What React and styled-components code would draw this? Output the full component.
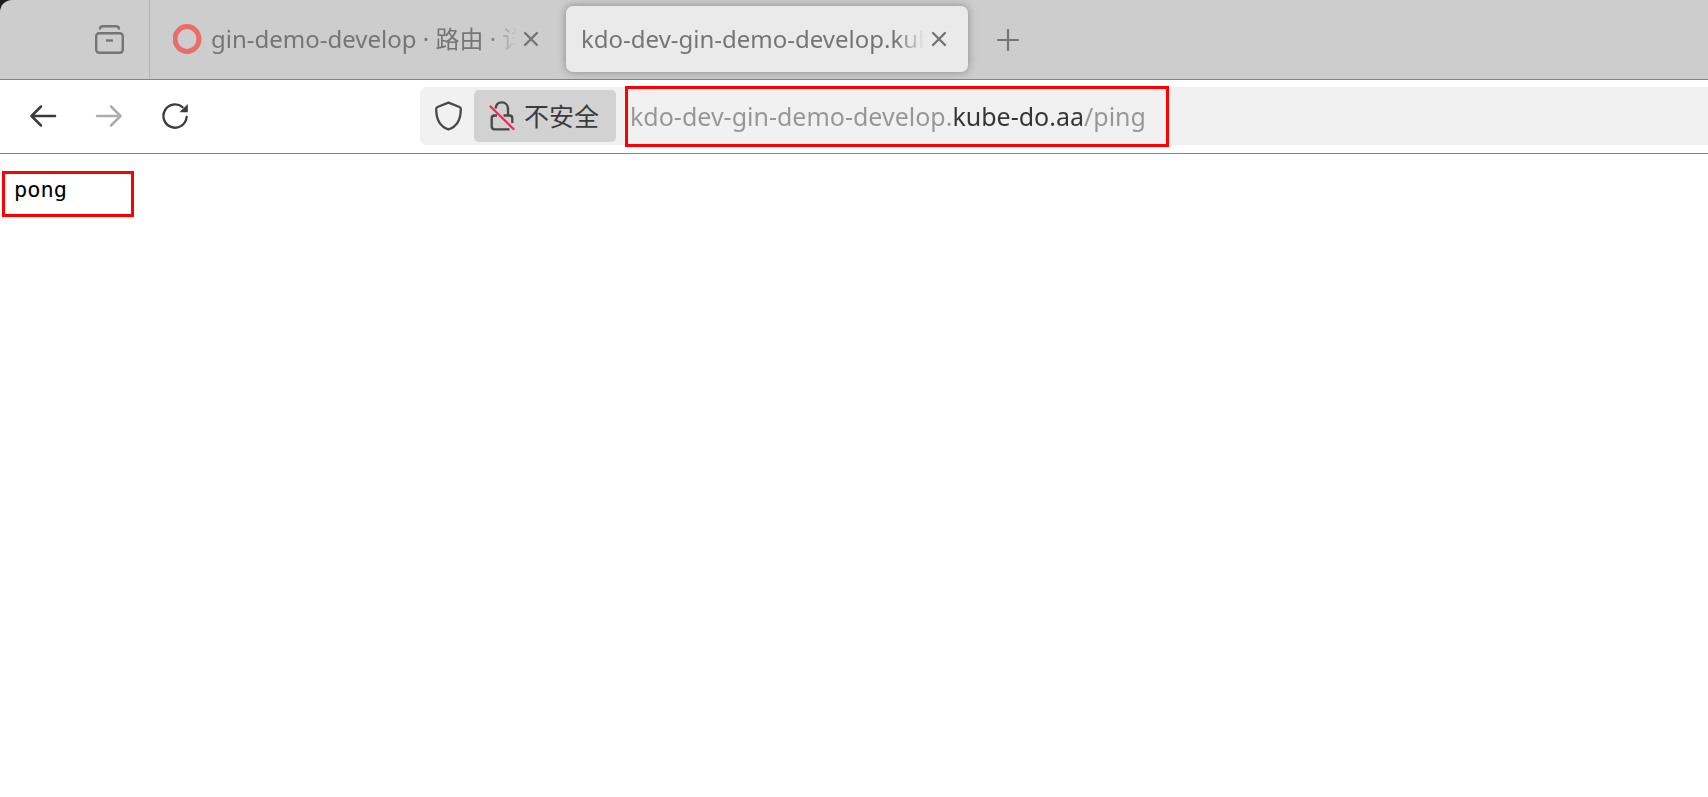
import React from "react";
import styled, { createGlobalStyle } from "styled-components";

const GlobalStyle = createGlobalStyle`
  *, *::before, *::after { box-sizing: border-box; }
  html, body { margin: 0; background: #fff; }
  body, button, input { font-family: "Noto Sans", "Noto Sans CJK SC", sans-serif; }
  button, input { margin: 0; padding: 0; border: 0; background: none; color: inherit; outline: none; }
  svg { display: block; fill: none; flex: none; overflow: visible; }
`;

const Backdrop = styled.div`
  background: #1c1b22;
`;

const TabStrip = styled.header`
  display: flex;
  height: 80px;
  background: #cdcdcd;
  border-bottom: 1px solid #848484;
  border-top-left-radius: 12px;
  color: #757575;
`;

const ArchiveButton = styled.button`
  display: flex;
  align-items: center;
  justify-content: flex-end;
  width: 150px;
  padding-right: 25px;
  border-right: 1px solid #b4b4b4;
`;

const Tabs = styled.div`
  display: flex;
  align-items: flex-start;
  gap: 6px;
  padding: 6px 8px;
`;

const Tab = styled.div`
  display: flex;
  align-items: center;
  width: 402px;
  height: 66px;
  padding: 0 21px 0 15px;
  border-radius: 7px;
  background: ${(p) => (p.$active ? "#eaeaea" : "transparent")};
  box-shadow: ${(p) => (p.$active ? "0 0 8px rgba(0, 0, 0, 0.35)" : "none")};
`;

const TabTitle = styled.button`
  display: flex;
  flex: 1;
  align-items: center;
  gap: 8px;
  min-width: 0;
  height: 66px;
  margin-right: 6px;
  font-size: 24px;
  line-height: 32px;
  white-space: nowrap;
  overflow: hidden;
  mask-image: linear-gradient(to left, transparent, #000 28px);
`;

const IconButton = styled.button`
  display: flex;
  align-items: center;
  justify-content: center;
  width: ${(p) => p.$width || 16}px;
  color: ${(p) => p.$color || "inherit"};
`;

const Toolbar = styled.nav`
  display: flex;
  align-items: center;
  height: 74px;
  padding: 7px 0 8px 10px;
  border-bottom: 1px solid #848484;
  background: #fff;
  color: #3b3b3b;
`;

const AddressBar = styled.form`
  display: flex;
  flex: 1;
  align-items: center;
  height: 58px;
  margin-left: 212px;
  padding-left: 15px;
  border-radius: 7px 0 0 7px;
  background: #f1f1f1;
`;

const SecurityBadge = styled.button`
  display: flex;
  align-items: center;
  gap: 9px;
  width: 142px;
  height: 52px;
  margin: 0 9px 0 11px;
  padding-left: 15px;
  border-radius: 5px;
  background: #d2d2d2;
  font-size: 25px;
  line-height: 36px;
  white-space: nowrap;
`;

const AddressField = styled.label`
  position: relative;
  flex: 1;
  padding-left: 5px;
`;

/* The registrable domain is darker than the rest of the address. */
const AddressInput = styled.input`
  display: block;
  width: 100%;
  height: 58px;
  font-size: 25px;
  background: linear-gradient(to right, #969696 323px, #353535 323px 454px, #969696 454px);
  -webkit-background-clip: text;
  background-clip: text;
  color: transparent;
`;

const Highlight = styled.span`
  position: absolute;
  inset: ${(p) => p.$inset};
  width: ${(p) => p.$width}px;
  border: 3px solid #fe0000;
  pointer-events: none;
`;

const Page = styled.main`
  position: relative;
  padding: 21px 14px;
`;

const Body = styled.pre`
  margin: 0;
  font: 22px/30px "DejaVu Sans Mono", monospace;
  color: #000;
`;

const CloseIcon = () => (
  <svg width="16" height="16" stroke="currentColor" strokeWidth="2.4" strokeLinecap="round">
    <path d="M2 2 14 14M14 2 2 14" />
  </svg>
);

const ArchiveIcon = () => (
  <svg width="29" height="29" stroke="currentColor" strokeWidth="2.4" strokeLinecap="round">
    <rect x="1.2" y="8.2" width="26.6" height="19.6" rx="3" />
    <path d="M5 3.5Q5.5 1.2 8 1.2H21Q23.5 1.2 24 3.5" />
    <path d="M11 15.5H18" strokeLinecap="butt" />
  </svg>
);

const ArrowIcon = ({ forward }) => (
  <svg width="26" height="22" stroke="currentColor" strokeWidth="2.5" strokeLinecap="round" strokeLinejoin="round">
    <path d={forward ? "M1 11H24.5M15 1.5 24.5 11 15 20.5" : "M25 11H1.5M11 1.5 1.5 11 11 20.5"} />
  </svg>
);

const ReloadIcon = () => (
  <svg width="26" height="26" stroke="currentColor" strokeWidth="2.3" strokeLinecap="round">
    <path d="M24.6 14A11.6 11.6 0 1 1 20.5 4.2" />
    <path d="M25.8 1V9.2H17.5Z" fill="currentColor" stroke="none" />
  </svg>
);

const ShieldIcon = () => (
  <svg width="28" height="30" stroke="#484848" strokeWidth="2.3" strokeLinejoin="round">
    <path d="M13.5 1.6 24.5 6Q25.8 6.5 25.8 8C25.8 17 22.5 25.5 13.5 28.4C4.5 25.5 1.2 17 1.2 8Q1.2 6.5 2.5 6Z" />
  </svg>
);

const InsecureIcon = () => (
  <svg width="26" height="30" stroke="#484848" strokeWidth="2.3" strokeLinecap="butt">
    <path d="M6.5 7.5C7 4 9 1.4 12.5 1.4C16.5 1.4 19 4 19 8V14.5" />
    <path d="M14.5 14.5H20.5Q23.3 14.5 23.3 17.5V22M8 14.5H5.5Q2.7 14.5 2.7 17.5V25Q2.7 28.3 5.5 28.3H20.5" />
    <path d="M1.5 5.5 24.5 28" stroke="#ff1f56" strokeWidth="2.2" strokeLinecap="round" />
  </svg>
);

const FavIcon = () => (
  <svg width="30" height="30" stroke="#e86d6b" strokeWidth="5">
    <ellipse cx="14" cy="15" rx="12" ry="12.5" />
  </svg>
);

const PlusIcon = () => (
  <svg width="22" height="22" stroke="currentColor" strokeWidth="2.2" strokeLinecap="round">
    <path d="M11 1V21M1 11H21" />
  </svg>
);

const tabs = [
  { title: "gin-demo-develop · 路由 · 详情", icon: true },
  { title: "kdo-dev-gin-demo-develop.kube-do.aa/ping", active: true },
];

export default function App() {
  return (
    <>
      <GlobalStyle />
      <Backdrop>
        <TabStrip>
          <ArchiveButton aria-label="Recent browsing"><ArchiveIcon /></ArchiveButton>
          <Tabs>
            {tabs.map((tab) => (
              <Tab key={tab.title} $active={tab.active}>
                <TabTitle>
                  {tab.icon && <FavIcon />}
                  <span>{tab.title}</span>
                </TabTitle>
                <IconButton aria-label="Close tab"><CloseIcon /></IconButton>
              </Tab>
            ))}
          </Tabs>
          <IconButton aria-label="New tab" $width={64}><PlusIcon /></IconButton>
        </TabStrip>
      </Backdrop>
      <Toolbar>
        <IconButton aria-label="Back" $width={66}><ArrowIcon /></IconButton>
        <IconButton aria-label="Forward" $width={66} $color="#adadad"><ArrowIcon forward /></IconButton>
        <IconButton aria-label="Reload" $width={66}><ReloadIcon /></IconButton>
        <AddressBar onSubmit={(e) => e.preventDefault()}>
          <IconButton type="button" aria-label="Tracking protection" $width={28}><ShieldIcon /></IconButton>
          <SecurityBadge type="button"><InsecureIcon />不安全</SecurityBadge>
          <AddressField>
            <AddressInput type="text" aria-label="Address" spellCheck={false} defaultValue="kdo-dev-gin-demo-develop.kube-do.aa/ping" />
            <Highlight $inset="-1px auto -2px 0" $width={544} />
          </AddressField>
        </AddressBar>
      </Toolbar>
      <Page>
        <Body>pong</Body>
        <Highlight $inset="17px auto 9px 2px" $width={132} />
      </Page>
    </>
  );
}
